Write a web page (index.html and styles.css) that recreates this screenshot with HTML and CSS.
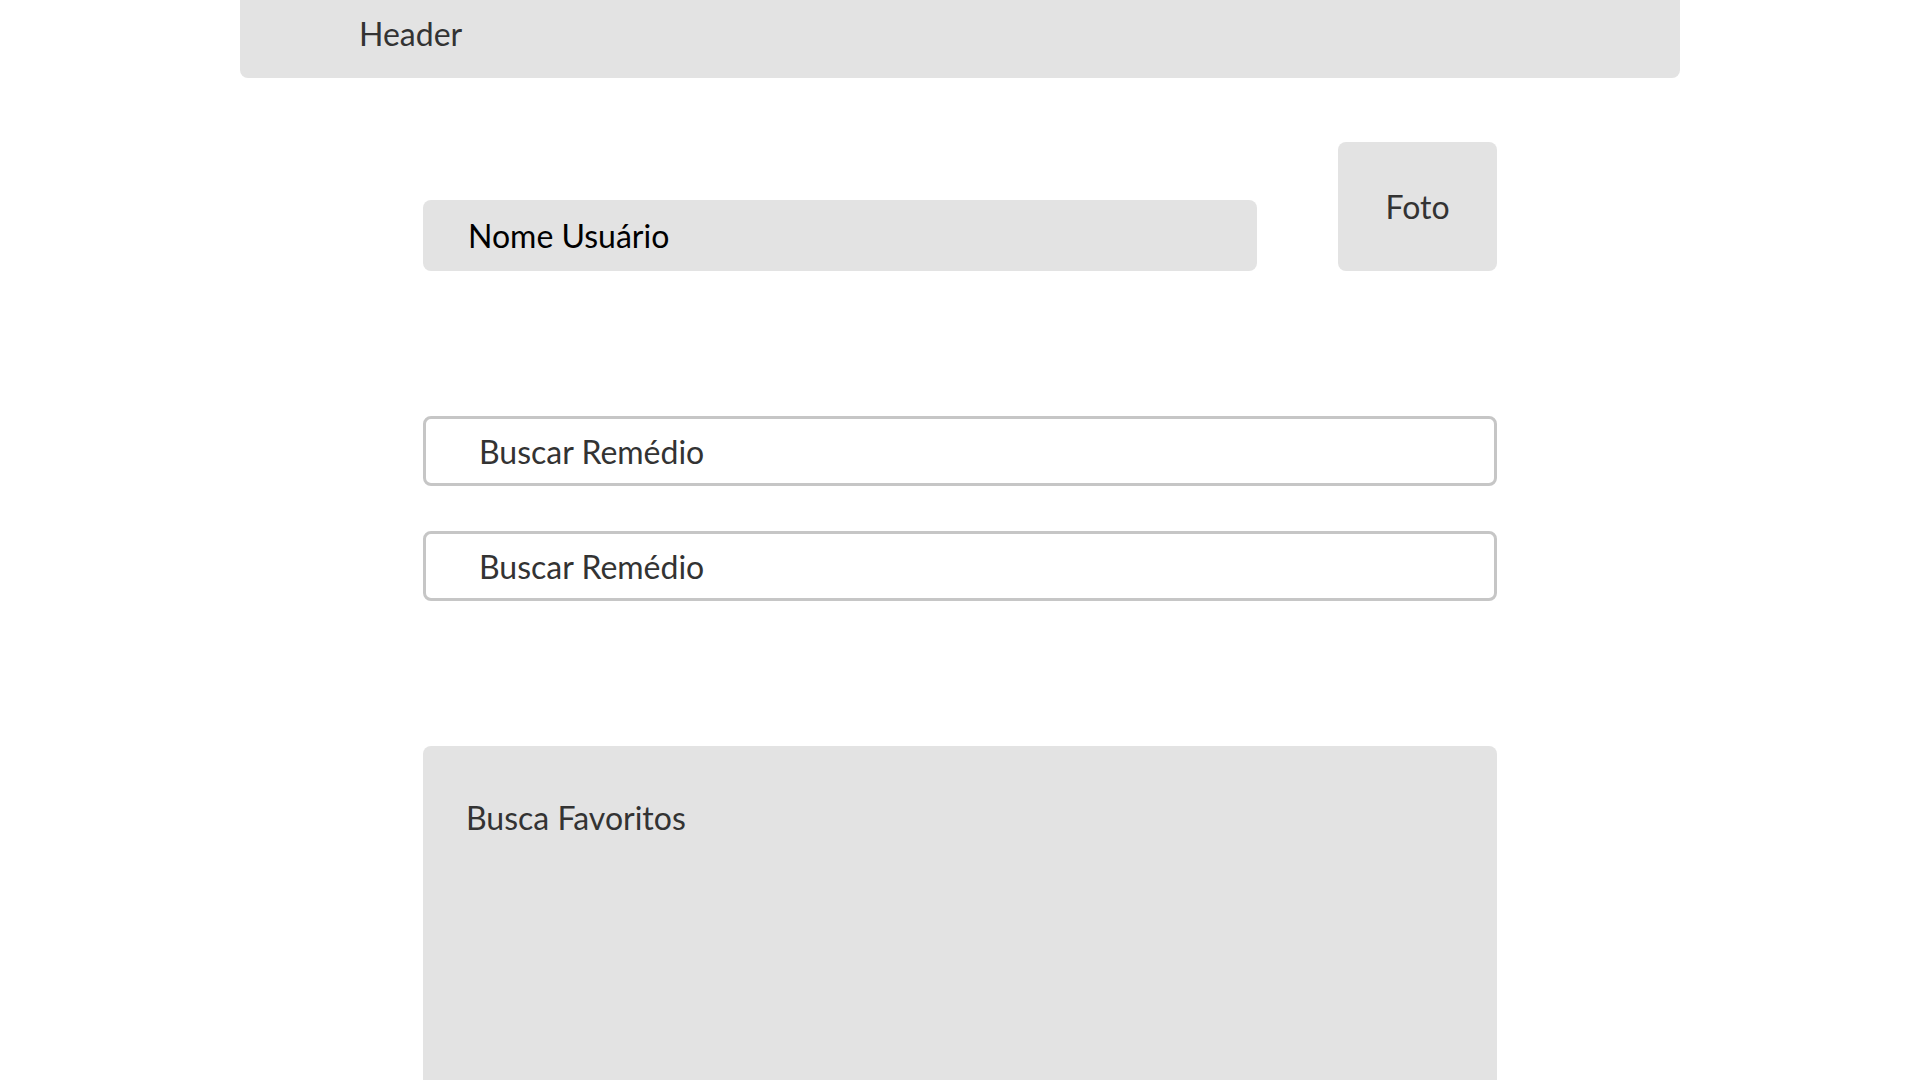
FILE: index.html
```html
<!DOCTYPE html>
<html lang="pt-BR">
<head>
<meta charset="utf-8">
<title>Perfil</title>
<link rel="stylesheet" href="styles.css">
</head>
<body>
  <header class="header">
    <span class="header-title">Header</span>
  </header>
  <main class="content">
    <section class="profile">
      <div class="user-name">Nome Usuário</div>
      <div class="photo">Foto</div>
    </section>
    <section class="searches">
      <div class="search-field">Buscar Remédio</div>
      <div class="search-field">Buscar Remédio</div>
    </section>
    <section class="favorites">
      <div class="favorites-title">Busca Favoritos</div>
    </section>
  </main>
</body>
</html>
```
FILE: styles.css
```css
html, body {
  margin: 0;
  padding: 0;
  background: #ffffff;
  font-family: Lato, "Open Sans", sans-serif;
  font-size: 32px;
  color: #333333;
  overflow: hidden;
  height: 100%;
}

.header {
  width: 1440px;
  height: 78px;
  margin: 0 auto;
  background: #e3e3e3;
  border-radius: 0 0 8px 8px;
  box-sizing: border-box;
  padding: 14px 0 0 119px;
}

.header-title {
  line-height: 1.2;
}

.content {
  width: 1074px;
  margin: 0 auto;
  padding-top: 64px;
}

.profile {
  display: flex;
  align-items: flex-end;
  gap: 81px;
}

.user-name {
  flex: 1;
  height: 71px;
  background: #e3e3e3;
  border-radius: 8px;
  display: flex;
  align-items: center;
  padding-left: 45px;
  color: #000000;
}

.photo {
  width: 159px;
  height: 129px;
  background: #e3e3e3;
  border-radius: 8px;
  display: flex;
  align-items: center;
  justify-content: center;
}

.searches {
  margin-top: 145px;
  display: flex;
  flex-direction: column;
  gap: 45px;
}

.search-field {
  height: 70px;
  box-sizing: border-box;
  border: 3px solid #c6c6c6;
  border-radius: 8px;
  display: flex;
  align-items: center;
  padding-left: 53px;
}

.favorites {
  margin-top: 145px;
  height: 400px;
  background: #e3e3e3;
  border-radius: 8px;
  box-sizing: border-box;
  padding: 53px 0 0 43px;
}

.favorites-title {
  line-height: 1.2;
}
```
